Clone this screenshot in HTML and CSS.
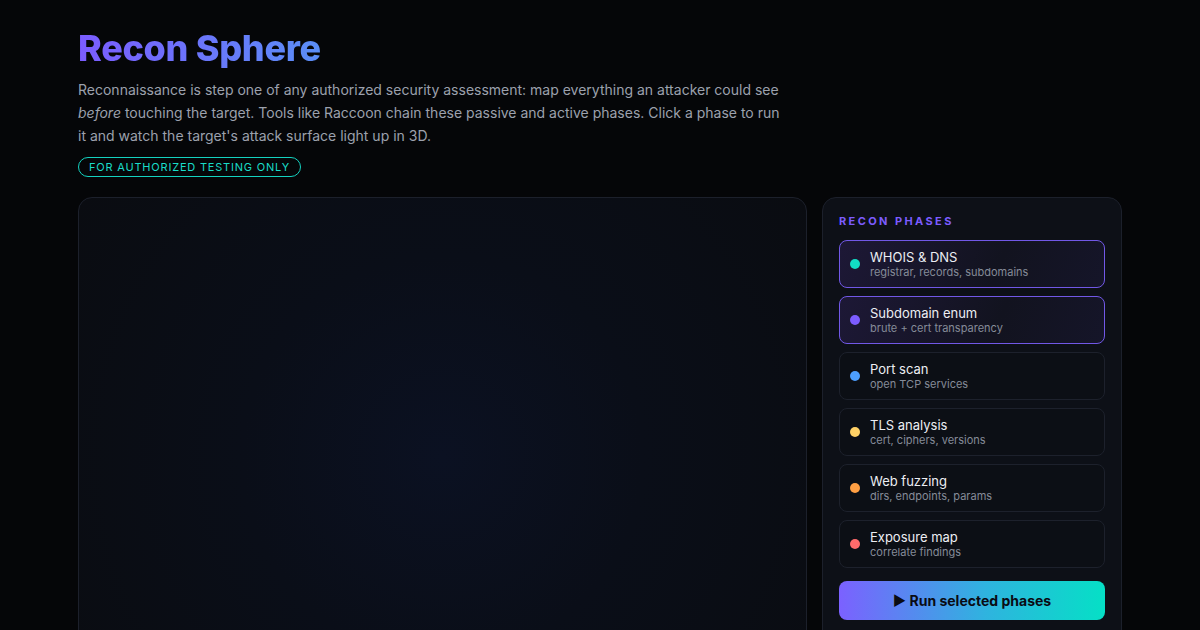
FILE: index.html
```html
<!DOCTYPE html>
<html lang="en">
<head>
  <meta charset="UTF-8">
  <meta name="viewport" content="width=device-width, initial-scale=1.0">
  <title>Recon Sphere</title>
  <link rel="stylesheet" href="styles.css">
</head>
<body>
  <div class="container">
    <h1><span class="title">Recon Sphere</span></h1>
    <p class="intro">Reconnaissance is step one of any authorized security assessment: map everything an attacker could see <em>before</em> touching the target. Tools like Raccoon chain these passive and active phases. Click a phase to run it and watch the target's attack surface light up in 3D.</p>
    <div class="badge">FOR AUTHORIZED TESTING ONLY</div>

    <div class="layout">
      <div class="stage"></div>

      <aside class="panel">
        <h2>Recon phases</h2>
        <ul class="phases">
          <li class="phase active">
            <span class="dot" style="background:#12dcc4"></span>
            <div>
              <div class="phase-name">WHOIS &amp; DNS</div>
              <div class="phase-desc">registrar, records, subdomains</div>
            </div>
          </li>
          <li class="phase active">
            <span class="dot" style="background:#7c5cff"></span>
            <div>
              <div class="phase-name">Subdomain enum</div>
              <div class="phase-desc">brute + cert transparency</div>
            </div>
          </li>
          <li class="phase">
            <span class="dot" style="background:#4d9fff"></span>
            <div>
              <div class="phase-name">Port scan</div>
              <div class="phase-desc">open TCP services</div>
            </div>
          </li>
          <li class="phase">
            <span class="dot" style="background:#ffd166"></span>
            <div>
              <div class="phase-name">TLS analysis</div>
              <div class="phase-desc">cert, ciphers, versions</div>
            </div>
          </li>
          <li class="phase">
            <span class="dot" style="background:#ff9f43"></span>
            <div>
              <div class="phase-name">Web fuzzing</div>
              <div class="phase-desc">dirs, endpoints, params</div>
            </div>
          </li>
          <li class="phase">
            <span class="dot" style="background:#ff6b6b"></span>
            <div>
              <div class="phase-name">Exposure map</div>
              <div class="phase-desc">correlate findings</div>
            </div>
          </li>
        </ul>
        <button class="run-btn">&#9654; Run selected phases</button>
      </aside>
    </div>
  </div>
</body>
</html>
```

FILE: styles.css
```css
* {
  box-sizing: border-box;
}

body {
  margin: 0;
  background: #050608;
  color: #e6e8ee;
  font-family: Inter, "Noto Sans", sans-serif;
}

.container {
  max-width: 1044px;
  margin: 0 auto;
  padding: 27px 0 0;
}

h1 {
  margin: 0 0 8px;
  font-size: 36px;
  line-height: 43px;
  font-weight: 800;
  letter-spacing: -0.3px;
}

.title {
  background: linear-gradient(90deg, #7b5cff, #5a8ef6);
  -webkit-background-clip: text;
  background-clip: text;
  color: transparent;
}

.intro {
  margin: 0 0 10px;
  max-width: 705px;
  font-size: 14px;
  line-height: 23px;
  color: #9ca1ad;
}

.badge {
  width: fit-content;
  padding: 2px 10px;
  border: 1px solid #14d2c0;
  border-radius: 999px;
  color: #19dcc8;
  font-size: 11px;
  line-height: 14px;
  letter-spacing: 0.8px;
}

.layout {
  display: grid;
  grid-template-columns: 1fr 300px;
  gap: 15px;
  margin-top: 20px;
}

.stage {
  height: 520px;
  border: 1px solid #1c202b;
  border-radius: 14px;
  background: radial-gradient(circle at 50% 50%, #0b1122 0%, #0a0e18 45%, #0a0c11 100%);
}

.panel {
  height: 520px;
  padding: 16px;
  border: 1px solid #1c202b;
  border-radius: 14px;
  background: #0d1017;
}

.panel h2 {
  margin: 0 0 12px;
  font-size: 11px;
  line-height: 14px;
  font-weight: 700;
  letter-spacing: 2.4px;
  text-transform: uppercase;
  color: #7c5cff;
}

.phases {
  list-style: none;
  margin: 0;
  padding: 0;
  display: flex;
  flex-direction: column;
  gap: 8px;
}

.phase {
  display: flex;
  align-items: center;
  gap: 10px;
  padding: 8px 10px;
  border: 1px solid #1d212c;
  border-radius: 8px;
  background: #0c0f15;
}

.phase.active {
  border-color: #7158e6;
  background: linear-gradient(110deg, #1d1836, #12131f 60%, #151529);
}

.dot {
  flex: none;
  width: 10px;
  height: 10px;
  border-radius: 50%;
}

.phase-name {
  font-size: 13px;
  line-height: 16px;
  color: #eceef3;
}

.phase-desc {
  font-size: 11px;
  line-height: 14px;
  color: #858b98;
}

.run-btn {
  display: block;
  width: 100%;
  height: 39px;
  margin-top: 13px;
  border: none;
  border-radius: 8px;
  background: linear-gradient(90deg, #7b61ff, #2fb3df 55%, #05e0c6);
  color: #0a0b14;
  font-family: Inter, "Noto Sans", sans-serif;
  font-size: 14px;
  font-weight: 700;
  cursor: pointer;
}
```
